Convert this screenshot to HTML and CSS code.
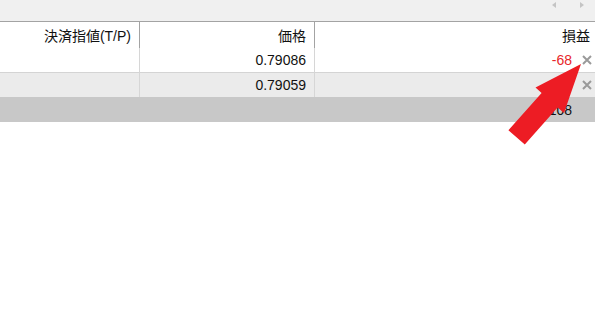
FILE: index.html
```html
<!DOCTYPE html>
<html lang="ja">
<head>
<meta charset="utf-8">
<link rel="stylesheet" href="styles.css">
</head>
<body>
<div class="topbar">
  <span class="scroll left"></span>
  <span class="scroll right"></span>
</div>
<div class="grid">
  <div class="cell head">決済指値(T/P)</div>
  <div class="cell head">価格</div>
  <div class="cell head last">損益</div>

  <div class="cell row1"></div>
  <div class="cell row1">0.79086</div>
  <div class="cell row1 last"><span class="loss">-68</span><svg class="close" viewBox="0 0 10 10"><path d="M1 1L9 9M9 1L1 9"/></svg></div>

  <div class="cell row2"></div>
  <div class="cell row2">0.79059</div>
  <div class="cell row2 last"><svg class="close" viewBox="0 0 10 10"><path d="M1 1L9 9M9 1L1 9"/></svg></div>
</div>
<div class="summary">108</div>
<svg class="arrow" width="595" height="313" viewBox="0 0 595 313">
  <polygon points="581,64 564,113 557.6,107.4 524.8,144.5 508.4,130.2 541.6,93 535.5,87.5"/>
</svg>
</body>
</html>
```

FILE: styles.css
```css
html, body {
  margin: 0;
  padding: 0;
  background: #ffffff;
  width: 595px;
  height: 313px;
  overflow: hidden;
  font-family: "Liberation Sans", "Noto Sans CJK JP", sans-serif;
  font-size: 14px;
  color: #111111;
  position: relative;
}

.topbar {
  height: 21px;
  background: #f0f0f0;
  border-bottom: 1px solid #a3a3a3;
  position: relative;
}

.scroll {
  position: absolute;
  top: 2px;
  width: 0;
  height: 0;
  border-top: 3.5px solid transparent;
  border-bottom: 3.5px solid transparent;
}
.scroll.left {
  left: 552px;
  border-right: 4px solid #c4c4c4;
}
.scroll.right {
  left: 580px;
  border-left: 4px solid #c4c4c4;
}

.grid {
  display: grid;
  grid-template-columns: 140px 175px 1fr;
  grid-template-rows: 26px 25px 24px;
}

.cell {
  display: flex;
  align-items: center;
  justify-content: flex-end;
  padding-right: 8px;
  border-right: 1px solid #d6d6d6;
  box-sizing: border-box;
  line-height: 1;
}
.cell.last {
  border-right: none;
  padding-right: 3px;
}

.head {
  border-right-color: #a3a3a3;
  padding-top: 1px;
}
.head.last {
  padding-right: 5px;
}

.row1 {
  border-bottom: 1px solid #d4d4d4;
  padding-bottom: 1px;
}

.row2 {
  background: #ebebeb;
}

.loss {
  color: #e8262a;
}

.close {
  width: 10px;
  height: 10px;
  margin-left: 10px;
  stroke: #9a9a9a;
  stroke-width: 2;
  fill: none;
}

.summary {
  height: 25px;
  background: #c8c8c8;
  display: flex;
  align-items: center;
  justify-content: flex-end;
  padding-right: 23px;
  line-height: 1;
}

.arrow {
  position: absolute;
  left: 0;
  top: 0;
  fill: #ed1c24;
}
```
